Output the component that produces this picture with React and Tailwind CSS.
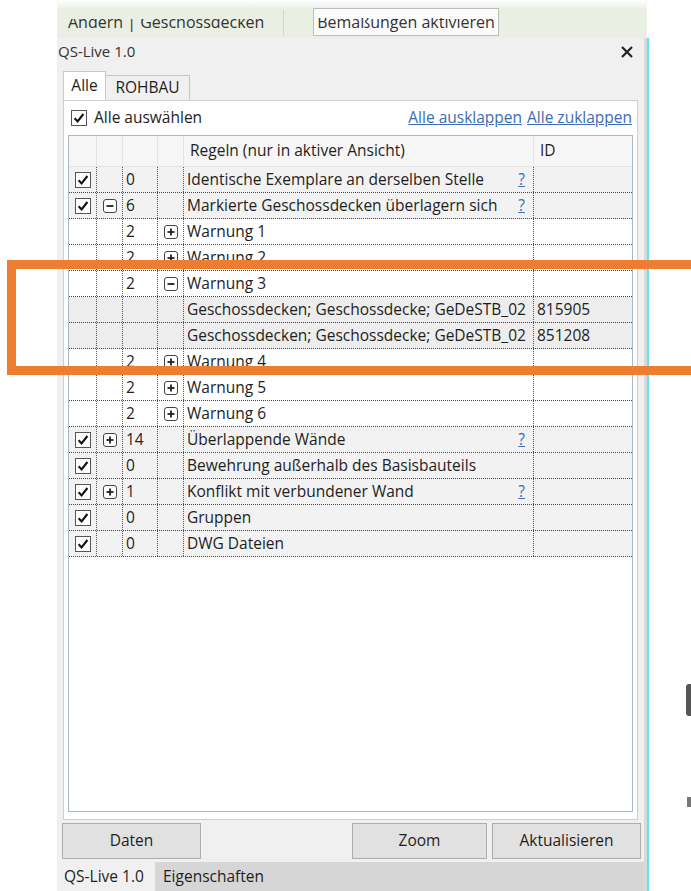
import React from "react";

const font = { fontFamily: '"Open Sans", "Noto Sans", "Liberation Sans", sans-serif' };

function Check() {
  return (
    <span className="inline-flex h-[16px] w-[16px] items-center justify-center border border-[#555] bg-white">
      <svg width="12" height="12" viewBox="0 0 12 12">
        <path d="M1.6 6.2 L4.6 9.4 L10.4 2" fill="none" stroke="#111" strokeWidth="2.1" />
      </svg>
    </span>
  );
}

function Toggle({ open }) {
  return (
    <span className="inline-flex h-[14px] w-[14px] items-center justify-center rounded-[3px] border-[1.5px] border-[#444] bg-white">
      <svg width="10" height="10" viewBox="0 0 10 10">
        <path d="M1.5 5 H8.5" stroke="#222" strokeWidth="1.8" />
        {!open && <path d="M5 1.5 V8.5" stroke="#222" strokeWidth="1.8" />}
      </svg>
    </span>
  );
}

const rows = [
  { kind: "rule", check: true, count: "0", text: "Identische Exemplare an derselben Stelle", q: true },
  { kind: "rule", check: true, tog1: "open", count: "6", text: "Markierte Geschossdecken überlagern sich", q: true },
  { kind: "warn", count: "2", tog2: "closed", text: "Warnung 1" },
  { kind: "warn", count: "2", tog2: "closed", text: "Warnung 2" },
  { kind: "warn", count: "2", tog2: "open", text: "Warnung 3" },
  { kind: "elem", text: "Geschossdecken; Geschossdecke; GeDeSTB_02", id: "815905" },
  { kind: "elem", text: "Geschossdecken; Geschossdecke; GeDeSTB_02", id: "851208" },
  { kind: "warn", count: "2", tog2: "closed", text: "Warnung 4" },
  { kind: "warn", count: "2", tog2: "closed", text: "Warnung 5" },
  { kind: "warn", count: "2", tog2: "closed", text: "Warnung 6" },
  { kind: "rule", check: true, tog1: "closed", count: "14", text: "Überlappende Wände", q: true },
  { kind: "rule", check: true, count: "0", text: "Bewehrung außerhalb des Basisbauteils" },
  { kind: "rule", check: true, tog1: "closed", count: "1", text: "Konflikt mit verbundener Wand", q: true },
  { kind: "rule", check: true, count: "0", text: "Gruppen" },
  { kind: "rule", check: true, count: "0", text: "DWG Dateien" },
];

const cols = "grid grid-cols-[28px_26px_35px_26px_350px_1fr]";

function Row({ r }) {
  const bg = r.kind === "warn" ? "bg-white" : r.kind === "elem" ? "bg-[#ededed]" : "bg-[#f2f2f2]";
  const cell = "border-r border-dotted border-[#555] flex items-center h-full";
  return (
    <div className={`${cols} h-[26px] border-b border-dotted border-[#444] ${bg}`}>
      <div className={`${cell} justify-center`}>{r.check && <Check />}</div>
      <div className={`${cell} justify-center`}>{r.tog1 && <Toggle open={r.tog1 === "open"} />}</div>
      <div className={`${cell} pl-[3px]`}>{r.count}</div>
      <div className={`${cell} justify-center`}>{r.tog2 && <Toggle open={r.tog2 === "open"} />}</div>
      <div className={`${cell} pl-[3px] pr-[8px] justify-between`}>
        <span className="whitespace-nowrap">{r.text}</span>
        {r.q && <span className="text-[#3b6db3] underline">?</span>}
      </div>
      <div className="flex h-full items-center pl-[3px]">{r.id}</div>
    </div>
  );
}

export default function App() {
  return (
    <div className="relative h-[891px] w-[691px] overflow-hidden bg-white text-[15.5px] text-[#1e1e1e]" style={font}>
      <div className="flex pl-[57px]">
        <div className="flex w-[590px] flex-col">
          {/* ribbon strip, scrolled partly out of view */}
          <div className="h-[8px] bg-gradient-to-b from-white to-[#eef1ea]" />
          <div className="flex h-[30px] items-start bg-[#e9efe2]">
            <div className="mt-[11px] h-[19px] w-[226px] overflow-hidden pl-[11px]">
              <div className="-mt-[8px] text-[16px] leading-[22px] text-[#333]">Ändern | Geschossdecken</div>
            </div>
            <div className="mt-[2px] h-[26px] w-px bg-[#cfd6c8]" />
            <div className="ml-[29px] flex h-[28px] w-[186px] flex-col border border-[#bdbdbd] bg-[#fbfbfb]">
              <div className="mt-[9px] h-[16px] overflow-hidden text-center">
                <div className="-mt-[7px] text-[16px] leading-[22px] text-[#333]">Bemaßungen aktivieren</div>
              </div>
            </div>
          </div>
          {/* panel */}
          <div className="flex flex-col border-r-[3px] border-[#d9d9d9] bg-[#f0f0f0]">
            <div className="flex h-[27px] items-center justify-between pl-[1px] pr-[10px]">
              <span className="text-[15px] text-[#333]">QS-Live 1.0</span>
              <svg width="14" height="14" viewBox="0 0 14 14">
                <path d="M2 2 L12 12 M12 2 L2 12" stroke="#222" strokeWidth="2.2" />
              </svg>
            </div>
            <div className="flex h-[35px] items-end pl-[6px]">
              <div className="flex h-[29px] w-[43px] items-center justify-center border border-b-0 border-[#c8c8c8] bg-white">Alle</div>
              <div className="flex h-[25px] w-[84px] items-center justify-center border border-b-0 border-l-0 border-[#c8c8c8] bg-[#f0f0f0]">ROHBAU</div>
            </div>
            <div className="mx-[6px] flex h-[720px] flex-col border border-[#cfcfcf] bg-white px-[4px]">
              <div className="flex h-[34px] items-center justify-between pl-[3px] pr-[1px]">
                <div className="flex items-center gap-[7px]">
                  <Check />
                  <span>Alle auswählen</span>
                </div>
                <div className="flex gap-[5px] text-[#3b6db3] underline">
                  <span>Alle ausklappen</span>
                  <span>Alle zuklappen</span>
                </div>
              </div>
              <div className="flex-1 border border-[#a8b8c8] bg-white">
                <div className={`${cols} h-[31px] bg-[#f6f6f6] border-b border-[#e2e2e2]`}>
                  <div className="border-r border-[#e2e2e2]" />
                  <div className="border-r border-[#e2e2e2]" />
                  <div className="border-r border-[#e2e2e2]" />
                  <div className="border-r border-[#e2e2e2]" />
                  <div className="flex items-center border-r border-[#e2e2e2] pl-[6px]">Regeln (nur in aktiver Ansicht)</div>
                  <div className="flex items-center pl-[6px]">ID</div>
                </div>
                {rows.map((r, i) => (
                  <Row key={i} r={r} />
                ))}
              </div>
              <div className="h-[7px]" />
            </div>
            <div className="flex h-[42px] items-center gap-[5px] pl-[5px] pr-[3px]">
              <div className="flex h-[36px] w-[139px] items-center justify-center border border-[#adadad] bg-[#e1e1e1]">Daten</div>
              <div className="flex-1" />
              <div className="flex h-[36px] w-[135px] items-center justify-center border border-[#adadad] bg-[#e1e1e1]">Zoom</div>
              <div className="flex h-[36px] w-[149px] items-center justify-center border border-[#adadad] bg-[#e1e1e1]">Aktualisieren</div>
            </div>
            <div className="flex h-[30px] items-center bg-[#d6d6d6]">
              <div className="flex h-full w-[98px] items-center bg-[#f0f0f0] pl-[7px]">QS-Live 1.0</div>
              <div className="pl-[8px]">Eigenschaften</div>
            </div>
          </div>
        </div>
        <div className="mt-[38px] h-[853px] w-[2px] bg-[#5fe3f0]" />
      </div>

      {/* bits of the neighbouring window peeking in at the right edge */}
      <div className="absolute left-[686px] top-[684px] h-[32px] w-[5px] rounded-l-[3px] bg-[#555]" />
      <div className="absolute left-[687px] top-[797px] h-[10px] w-[4px] bg-[#777]" />

      {/* highlight frame drawn over the table */}
      <div className="absolute left-[7px] top-[260px] h-[115px] w-[700px] border-[9px] border-[#ed7d31]" />
    </div>
  );
}
